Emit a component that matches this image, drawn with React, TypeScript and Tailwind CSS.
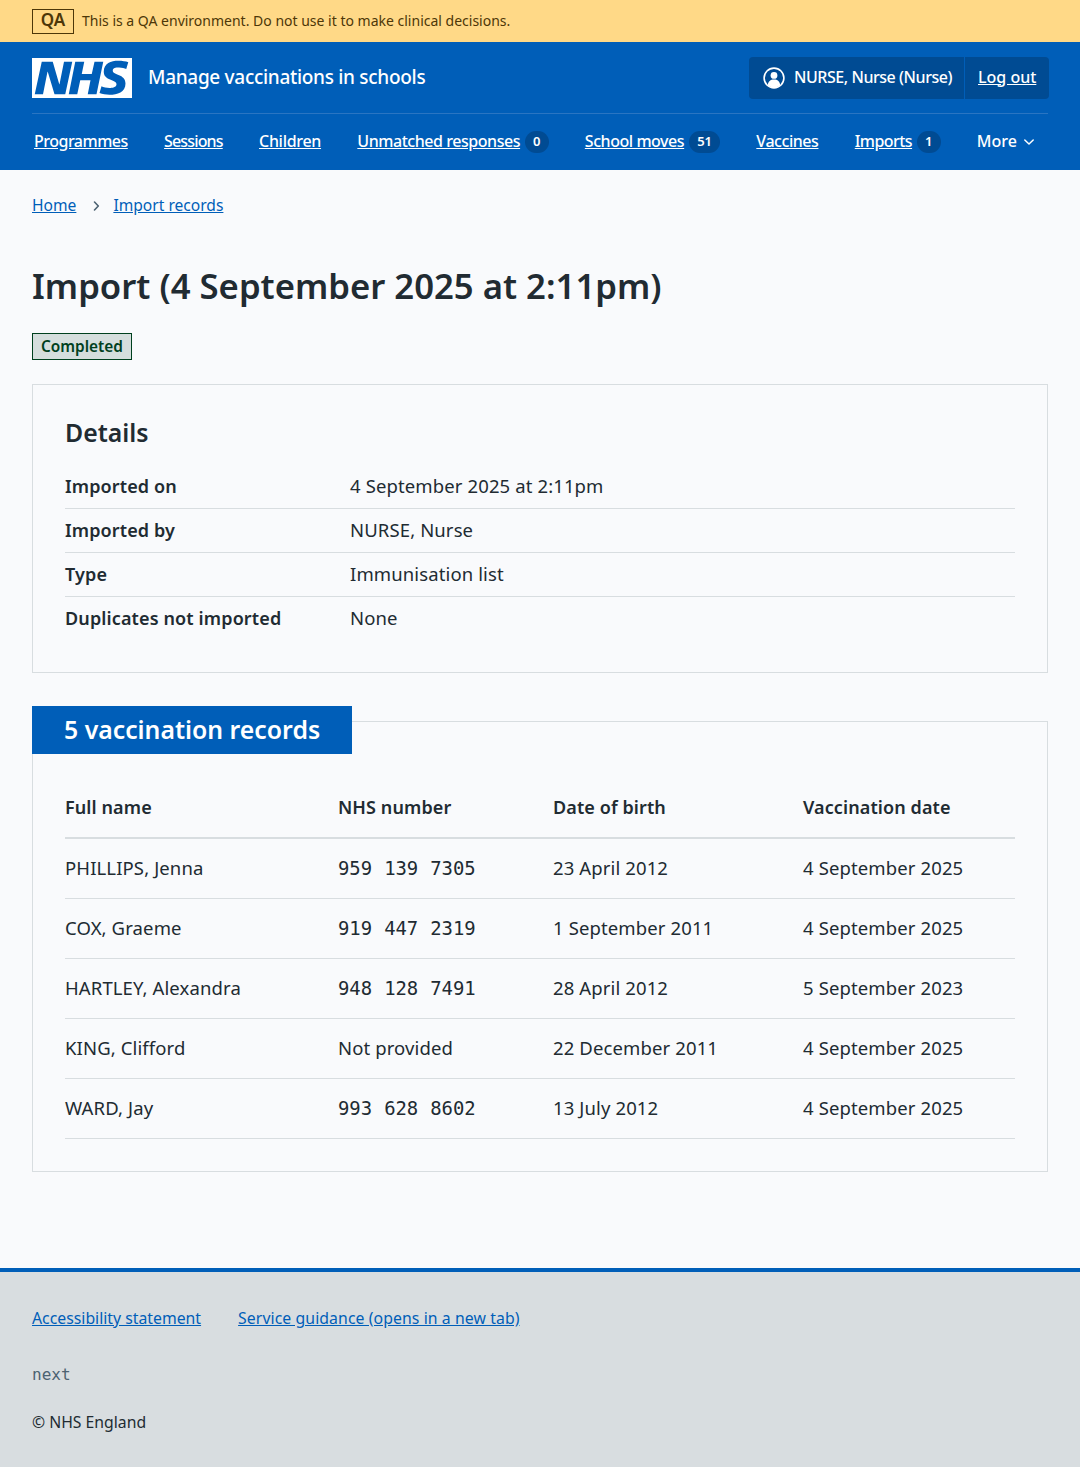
const records = [
  { name: 'PHILLIPS, Jenna', nhs: ['959', '139', '7305'], dob: '23 April 2012', date: '4 September 2025' },
  { name: 'COX, Graeme', nhs: ['919', '447', '2319'], dob: '1 September 2011', date: '4 September 2025' },
  { name: 'HARTLEY, Alexandra', nhs: ['948', '128', '7491'], dob: '28 April 2012', date: '5 September 2023' },
  { name: 'KING, Clifford', nhs: null, dob: '22 December 2011', date: '4 September 2025' },
  { name: 'WARD, Jay', nhs: ['993', '628', '8602'], dob: '13 July 2012', date: '4 September 2025' },
];

const details = [
  ['Imported on', '4 September 2025 at 2:11pm'],
  ['Imported by', 'NURSE, Nurse'],
  ['Type', 'Immunisation list'],
  ['Duplicates not imported', 'None'],
];

const navItems = [
  { label: 'Programmes', tracking: 'tracking-[-0.5px]' },
  { label: 'Sessions', tracking: 'tracking-[-0.85px]' },
  { label: 'Children', tracking: 'tracking-[-0.3px]' },
  { label: 'Unmatched responses', tracking: 'tracking-[-0.45px]', count: '0' },
  { label: 'School moves', tracking: 'tracking-[-0.45px]', count: '51' },
  { label: 'Vaccines', tracking: 'tracking-[-0.45px]' },
  { label: 'Imports', tracking: 'tracking-[-0.55px]', count: '1' },
];

function NhsLogo() {
  return (
    <svg className="h-10 w-[100px] shrink-0" viewBox="0 0 40 16" aria-label="NHS">
      <path fill="#fff" d="M0 0h40v16H0z" />
      <path
        fill="#005eb8"
        d="M3.9 1.5h4.4l2.6 9h.1l1.8-9h3.3l-2.8 13H9l-2.7-9h-.1l-1.8 9H1.1M17.3 1.5h3.6l-1 4.9h4L25 1.5h3.5l-2.7 13h-3.5l1.1-5.6h-4.1l-1.2 5.6h-3.4M37.7 4.4c-.7-.3-1.6-.6-2.9-.6-1.4 0-2.5.2-2.5 1.3 0 1.8 5.1 1.2 5.1 5.1 0 3.6-3.3 4.5-6.4 4.5-1.3 0-2.9-.3-4-.7l.8-2.7c.7.4 2.1.7 3.2.7s2.8-.2 2.8-1.5c0-2.1-5.1-1.3-5.1-5 0-3.4 2.9-4.4 5.8-4.4 1.6 0 3.1.2 4 .6"
      />
    </svg>
  );
}

function UserIcon() {
  return (
    <svg className="h-[22px] w-[22px] shrink-0" viewBox="0 0 22 22" fill="none">
      <circle cx="11" cy="11" r="9.9" stroke="#fff" strokeWidth="1.6" />
      <circle cx="11" cy="8.4" r="3.4" fill="#fff" />
      <path d="M4.8 18.2c.3-3.6 2.6-5.6 6.2-5.6s5.9 2 6.2 5.6a9.2 9.2 0 0 1-12.4 0Z" fill="#fff" />
    </svg>
  );
}

export default function App() {
  return (
    <div className="flex min-h-[1467px] flex-col bg-[#f9fafc] font-['Noto_Sans',sans-serif] text-[#212b32]">
      <div className="flex h-[42px] items-center bg-[#ffd987] px-8">
        <span className="mr-2 flex h-[25px] w-[42px] items-center justify-center border border-[#4d3708] pb-[2px] text-[17px] font-semibold text-[#4d3708]">
          QA
        </span>
        <p className="pb-[2px] text-[14px] text-[#4d3708]">This is a QA environment. Do not use it to make clinical decisions.</p>
      </div>

      <header className="bg-[#005eb8] text-white">
        <div className="flex h-[71px] items-center justify-between pl-8 pr-[31px]">
          <div className="flex items-center gap-4">
            <NhsLogo />
            <span className="text-[19px] font-medium tracking-[-0.3px]">Manage vaccinations in schools</span>
          </div>
          <div className="flex h-[42px] w-[300px] items-center rounded-[4px] bg-[#004b93] text-[16px]">
            <div className="flex h-full w-[216px] items-center gap-[9px] border-r border-[#005eb8] pl-[14px]">
              <UserIcon />
              <span className="pb-[2px] font-medium tracking-[-0.45px]">NURSE, Nurse (Nurse)</span>
            </div>
            <a className="ml-[13px] pb-[2px] font-medium underline">Log out</a>
          </div>
        </div>
        <div className="mx-8 border-t border-[#2a75c2]" />
        <nav className="flex h-[56px] items-center pr-[45px] pl-[34px] text-[16px] font-medium">
          <div className="flex flex-1 items-center justify-between">
            {navItems.map((item) => (
              <div key={item.label} className="flex items-center gap-[5px]">
                <a className={`pb-[2px] underline ${item.tracking}`}>{item.label}</a>
                {item.count && (
                  <span className="flex h-[22px] min-w-[22px] items-center justify-center rounded-full bg-[#004b93] px-2 text-[13px] font-semibold">
                    {item.count}
                  </span>
                )}
              </div>
            ))}
            <div className="flex items-center gap-[6px]">
              <span className="pb-[2px]">More</span>
              <svg className="h-3 w-3" viewBox="0 0 12 12" fill="none">
                <path d="M1.8 4l4.2 4 4.2-4" stroke="#fff" strokeWidth="1.5" strokeLinecap="round" strokeLinejoin="round" />
              </svg>
            </div>
          </div>
        </nav>
      </header>

      <main className="flex-1 px-8 pb-24">
        <div className="flex items-center pt-[24px] text-[15.6px] text-[#005eb8]">
          <a className="underline">Home</a>
          <svg className="mr-[11px] ml-[14px] h-3 w-3" viewBox="0 0 12 12" fill="none">
            <path d="M4.5 2l3.8 4-3.8 4" stroke="#4c6272" strokeWidth="1.6" strokeLinecap="round" strokeLinejoin="round" />
          </svg>
          <a className="underline">Import records</a>
        </div>

        <h1 className="mt-[45px] text-[34.7px] leading-[48px] font-semibold">Import (4 September 2025 at 2:11pm)</h1>

        <span className="mt-[23px] flex h-[27px] w-[100px] items-center justify-center border border-[#00401e] bg-[#d5dedd] pb-[1px] text-[15.4px] font-semibold text-[#00401e]">
          Completed
        </span>

        <section className="mt-[24px] border border-[#d8dde0] px-8 pt-[31px] pb-[31px]">
          <h2 className="text-[24.8px] leading-[32px] font-semibold">Details</h2>
          <dl className="mt-[17px] text-[18.5px] tracking-[0.12px]">
            {details.map(([term, value], i) => (
              <div
                key={term}
                className={i < details.length - 1 ? 'flex h-[44px] items-center border-b border-[#d8dde0]' : 'flex h-[44px] items-center border-b border-transparent'}
              >
                <dt className="w-[285px] text-[18px] font-semibold tracking-[0.13px]">{term}</dt>
                <dd className="pb-[2px]">{value}</dd>
              </div>
            ))}
          </dl>
        </section>

        <section className="relative mt-[48px] border border-[#d8dde0] px-8 pt-[56px] pb-[32px]">
          <h2 className="absolute -top-[16px] -left-px flex h-[48px] w-[320px] items-center bg-[#005eb8] pb-[2px] pl-[32px] text-[24.8px] font-semibold text-white">
            5 vaccination records
          </h2>
          <table className="w-full table-fixed text-left text-[18.5px] tracking-[0.12px]">
            <thead>
              <tr className="h-[60px] border-b-2 border-[#d8dde0] text-[18px] tracking-[0.1px]">
                <th className="w-[273px] font-semibold">Full name</th>
                <th className="w-[215px] font-semibold">NHS number</th>
                <th className="w-[250px] font-semibold">Date of birth</th>
                <th className="font-semibold">Vaccination date</th>
              </tr>
            </thead>
            <tbody>
              {records.map((r) => (
                <tr key={r.name} className="h-[60px] border-b border-[#d8dde0]">
                  <td className="pb-[2px]">{r.name}</td>
                  <td className={r.nhs ? '' : 'pb-[2px]'}>
                    {r.nhs ? (
                      <span className="flex gap-[12px] font-['DejaVu_Sans_Mono',monospace] text-[18.9px] tracking-normal">
                        {r.nhs.map((part) => (
                          <span key={part}>{part}</span>
                        ))}
                      </span>
                    ) : (
                      'Not provided'
                    )}
                  </td>
                  <td className="pb-[2px]">{r.dob}</td>
                  <td className="pb-[2px]">{r.date}</td>
                </tr>
              ))}
            </tbody>
          </table>
        </section>
      </main>

      <footer className="h-[199px] border-t-4 border-[#005eb8] bg-[#d8dde0] px-8 pt-[35px] text-[15.8px]">
        <div className="flex gap-[37px] text-[#005eb8]">
          <a className="underline">Accessibility statement</a>
          <a className="tracking-[0.08px] underline">Service guidance (opens in a new tab)</a>
        </div>
        <p className="mt-[32px] font-['DejaVu_Sans_Mono',monospace] text-[16px] text-[#4c6272]">next</p>
        <p className="mt-[24px] text-[15.75px]">© NHS England</p>
      </footer>
    </div>
  );
}
